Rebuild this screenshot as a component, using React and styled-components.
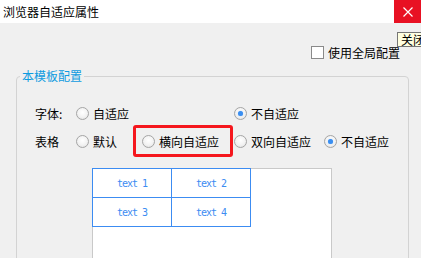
import styled, { createGlobalStyle } from "styled-components";

const GlobalStyle = createGlobalStyle`
    html, body {
        margin: 0;
        padding: 0;
        background: #f0f0f0;
    }
    #root {
        width: 421px;
        height: 258px;
        overflow: hidden;
    }
`;

const Window = styled.div`
    display: flex;
    flex-direction: column;
    width: 421px;
    height: 258px;
    background: #f0f0f0;
    font-family: "Noto Sans CJK SC", "Microsoft YaHei", sans-serif;
    font-size: 12px;
    color: #000;
`;

const TitleBar = styled.div`
    display: flex;
    justify-content: space-between;
    align-items: stretch;
    height: 23px;
    background: #fff;
    flex-shrink: 0;
`;

const Title = styled.div`
    display: flex;
    align-items: center;
    padding-left: 3px;
    line-height: 14px;
`;

const CloseButton = styled.div`
    width: 27px;
    display: flex;
    align-items: center;
    justify-content: center;
    background: #e81123;
`;

const Content = styled.div`
    position: relative;
    flex: 1;
    display: flex;
    flex-direction: column;
`;

const Tooltip = styled.div`
    position: absolute;
    top: 9px;
    left: 397px;
    height: 13px;
    padding: 0 3px;
    background: #ffffe1;
    border: 1px solid #767676;
    line-height: 13px;
    white-space: nowrap;
    z-index: 2;
`;

const GlobalRow = styled.label`
    display: flex;
    align-items: center;
    justify-content: flex-end;
    gap: 4px;
    margin-top: 23px;
    padding-right: 21px;
    height: 13px;
    line-height: 13px;
`;

const CheckBox = styled.span`
    box-sizing: border-box;
    width: 13px;
    height: 13px;
    border: 1px solid #8a8a8a;
    background: #fff;
`;

const Group = styled.fieldset`
    margin: 10px 12px 0 16px;
    padding: 20px 0 0 0;
    border: 1px solid #d3d3d3;
    border-radius: 4px;
    height: 220px;
    flex-shrink: 0;
`;

const Legend = styled.legend`
    margin-left: 3px;
    padding: 0 2px;
    line-height: 14px;
    color: #0e9be0;
`;

const OptionGrid = styled.div`
    display: grid;
    grid-template-columns: 41px 57px 101px 90px auto;
    grid-template-rows: 20px 32px;
    row-gap: 2px;
    align-items: center;
    padding-left: 18px;
`;

const FieldLabel = styled.div`
    grid-column: 1;
`;

const Option = styled.div`
    grid-column: ${(p) => p.$col};
    display: flex;
    align-items: center;
    gap: 4px;
    white-space: nowrap;
`;

const Highlight = styled.div`
    grid-column: 3;
    box-sizing: border-box;
    height: 32px;
    width: 100px;
    border: 3px solid #f5171d;
    border-radius: 3px;
    display: flex;
    align-items: center;
    gap: 4px;
    padding-left: 6px;
    white-space: nowrap;
`;

const Radio = styled.span`
    box-sizing: border-box;
    width: 13px;
    height: 13px;
    border-radius: 50%;
    border: 1px solid #a5a5a5;
    background: radial-gradient(circle at 50% 40%, #ffffff 0%, #f2f2f2 55%, #dcdcdc 100%);
    display: flex;
    align-items: center;
    justify-content: center;

    &::after {
        content: "";
        display: ${(p) => (p.$checked ? "block" : "none")};
        width: 5px;
        height: 5px;
        border-radius: 50%;
        background: #3a8ef0;
        box-shadow: 0 0 1px #7fb4f5;
    }
`;

const Preview = styled.div`
    margin: 11px 0 0 75px;
    width: 240px;
    height: 120px;
    box-sizing: border-box;
    background: #fff;
    border: 1px solid #c9c9c9;
`;

const PreviewTable = styled.div`
    display: grid;
    grid-template-columns: 78px 78px;
    grid-auto-rows: 28px;
    gap: 1px;
    width: max-content;
    margin: -1px 0 0 -1px;
    border: 1px solid #3c8cf2;
    background: #3c8cf2;
`;

const Cell = styled.div`
    background: #fff;
    display: flex;
    align-items: center;
    justify-content: center;
    font-family: "DejaVu Sans Mono", "Liberation Mono", monospace;
    font-size: 10px;
    letter-spacing: -1px;
    color: #3c8cf2;
`;

export default function App() {
    const cells = ["text 1", "text 2", "text 3", "text 4"];

    return (
        <Window>
            <GlobalStyle />
            <TitleBar>
                <Title>浏览器自适应属性</Title>
                <CloseButton>
                    <svg width="10" height="10" viewBox="0 0 10 10">
                        <path d="M0.5 0.5 L9.5 9.5 M9.5 0.5 L0.5 9.5" stroke="#fff" strokeWidth="1.2" />
                    </svg>
                </CloseButton>
            </TitleBar>
            <Content>
                <Tooltip>关闭</Tooltip>
                <GlobalRow>
                    <CheckBox />
                    使用全局配置
                </GlobalRow>
                <Group>
                    <Legend>本模板配置</Legend>
                    <OptionGrid>
                        <FieldLabel>字体:</FieldLabel>
                        <Option $col={2}>
                            <Radio />
                            自适应
                        </Option>
                        <Option $col={4}>
                            <Radio $checked />
                            不自适应
                        </Option>

                        <FieldLabel>表格</FieldLabel>
                        <Option $col={2}>
                            <Radio />
                            默认
                        </Option>
                        <Highlight>
                            <Radio />
                            横向自适应
                        </Highlight>
                        <Option $col={4}>
                            <Radio />
                            双向自适应
                        </Option>
                        <Option $col={5}>
                            <Radio $checked />
                            不自适应
                        </Option>
                    </OptionGrid>
                    <Preview>
                        <PreviewTable>
                            {cells.map((c) => (
                                <Cell key={c}>{c}</Cell>
                            ))}
                        </PreviewTable>
                    </Preview>
                </Group>
            </Content>
        </Window>
    );
}
